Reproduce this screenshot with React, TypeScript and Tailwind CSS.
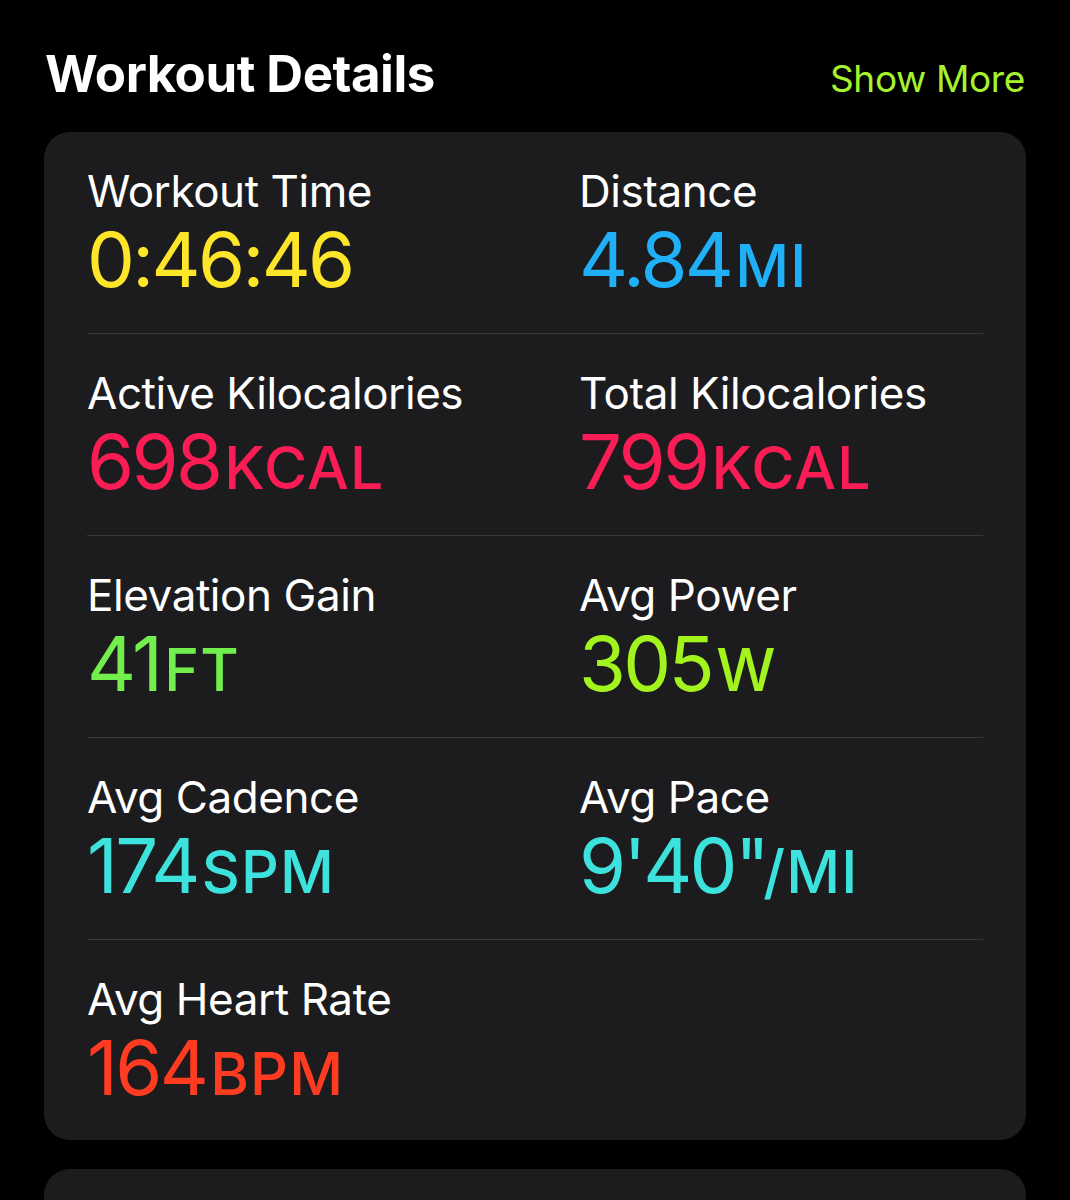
import React from "react";

type Stat = { label: string; value: React.ReactNode; unit: string; color: string };

const rows: Stat[][] = [
  [
    { label: "Workout Time", value: "0:46:46", unit: "", color: "text-[#fde62a]" },
    { label: "Distance", value: "4.84", unit: "MI", color: "text-[#1fb0f7]" },
  ],
  [
    { label: "Active Kilocalories", value: "698", unit: "KCAL", color: "text-[#fa1d55]" },
    { label: "Total Kilocalories", value: "799", unit: "KCAL", color: "text-[#fa1d55]" },
  ],
  [
    { label: "Elevation Gain", value: "41", unit: "FT", color: "text-[#72ef4d]" },
    { label: "Avg Power", value: "305", unit: "W", color: "text-[#a3f41e]" },
  ],
  [
    { label: "Avg Cadence", value: "174", unit: "SPM", color: "text-[#3de2dd]" },
    {
      label: "Avg Pace",
      value: (
        <>
          9<span className="tracking-[-0.12em]">'</span>
          <span className="ml-[6px]">40</span>
          <span className="tracking-[-0.14em]">''</span>
        </>
      ),
      unit: "/MI",
      color: "text-[#3de2dd]",
    },
  ],
  [{ label: "Avg Heart Rate", value: "164", unit: "BPM", color: "text-[#ff3b21]" }],
];

function Cell({ s }: { s?: Stat }) {
  if (!s) return <div />;
  return (
    <div className="flex flex-col">
      <div className="text-[44px] leading-[52px] text-white tracking-[-0.01em]">{s.label}</div>
      <div className={`mt-[2px] leading-[80px] ${s.color} flex items-baseline`}>
        <span className="text-[76px] tracking-[-0.035em]">{s.value}</span>
        {s.unit && (
          <span className="ml-[4px] text-[59px] font-medium tracking-[0.02em]">{s.unit}</span>
        )}
      </div>
    </div>
  );
}

export default function App() {
  return (
    <div
      className="min-h-[1200px] bg-black overflow-hidden"
      style={{ fontFamily: "Inter, 'Noto Sans', sans-serif" }}
    >
      <div className="flex items-baseline justify-between pl-[45px] pr-[45px] pt-[44px]">
        <h1 className="text-[51px] leading-[60px] font-bold text-white tracking-[-0.01em]">
          Workout Details
        </h1>
        <span className="text-[37px] text-[#a6f22c] tracking-[-0.01em]">Show More</span>
      </div>
      <div className="mx-[44px] mt-[25px] rounded-[26px] bg-[#1c1c1e] px-[43px]">
        {rows.map((r, i) => (
          <div
            key={i}
            className={`grid grid-cols-[492px_1fr] pt-[33px] ${
              i < rows.length - 1 ? "h-[202px] border-b border-[#38383a]" : "h-[200px]"
            }`}
          >
            <Cell s={r[0]} />
            <Cell s={r[1]} />
          </div>
        ))}
      </div>
      <div className="mx-[44px] mt-[29px] h-[60px] rounded-t-[26px] bg-[#1c1c1e]" />
    </div>
  );
}
